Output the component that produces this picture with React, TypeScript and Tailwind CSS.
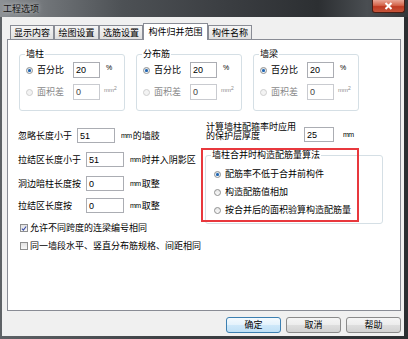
import React from "react";

function Radio({ checked, disabled }: { checked?: boolean; disabled?: boolean }) {
  return (
    <span
      className={
        disabled
          ? "w-[7px] h-[7px] rounded-full border border-[#cfcfcf] bg-[#f3f3f3] flex items-center justify-center shrink-0"
          : "w-[7px] h-[7px] rounded-full border border-[#8e8f8f] bg-[linear-gradient(#e6e6e6,#fafafa)] flex items-center justify-center shrink-0"
      }
    >
      {checked && <span className="w-[3px] h-[3px] rounded-full bg-[#1f63b0] shadow-[0_0_1px_#7fb4e8]" />}
    </span>
  );
}

function Check({ checked }: { checked?: boolean }) {
  return (
    <span className="w-[8px] h-[8px] border border-[#8e8f8f] bg-[linear-gradient(#e2e2e2,#f8f8f8)] flex items-center justify-center shrink-0">
      {checked && (
        <svg width="7" height="7" viewBox="0 0 7 7">
          <path d="M1 3.6 L2.8 5.4 L6 1.2" stroke="#3a4ea8" strokeWidth="1.3" fill="none" />
        </svg>
      )}
    </span>
  );
}

function Field({ value, w, disabled }: { value: string; w: string; disabled?: boolean }) {
  return (
    <div
      className={
        (disabled
          ? "border-[#c9cbd0] text-[#444] "
          : "border-[#abadb3] text-black ") +
        "border bg-white pl-[2px] flex items-center shrink-0 " +
        w
      }
    >
      {value}
    </div>
  );
}

function Group({ title }: { title: string }) {
  return (
    <div className="relative w-[106px] h-[57px] border border-[#d5dfe5] rounded-[3px] flex flex-col pt-[7px] pl-[6px] gap-[6px]">
      <span className="absolute left-[5px] top-[-6px] bg-white px-[1px] leading-[10px]">{title}</span>
      <div className="flex items-center h-[16px]">
        <Radio checked />
        <span className="ml-[4px] w-[36px]">百分比</span>
        <Field value="20" w="w-[27px] h-[16px]" />
        <span className="ml-[6px] text-[7px] mb-[4px]">%</span>
      </div>
      <div className="flex items-center h-[16px]">
        <Radio disabled />
        <span className="ml-[4px] w-[36px] text-[#8a8a8a]">面积差</span>
        <Field value="0" w="w-[27px] h-[16px]" disabled />
        <span className="ml-[4px] text-[6px] text-[#8a8a8a] mb-[4px]">
          mm<sup className="text-[5px]">2</sup>
        </span>
      </div>
    </div>
  );
}

function Btn({ label, def }: { label: string; def?: boolean }) {
  return (
    <div
      className={
        def
          ? "w-[55px] h-[16px] rounded-[3px] border border-[#3c7fb1] bg-[linear-gradient(#f4fafe,#e3f2fc_50%,#cfe8f9_51%,#bfe0f6)] flex items-center justify-center"
          : "w-[55px] h-[16px] rounded-[3px] border border-[#8a8a8a] bg-[linear-gradient(#f5f5f5,#ececec_50%,#dedede_51%,#d2d2d2)] flex items-center justify-center"
      }
    >
      {label}
    </div>
  );
}

function Tab({ label, w, active }: { label: string; w: string; active?: boolean }) {
  return (
    <div
      className={
        active
          ? "relative z-10 h-[17px] mb-[-1px] bg-white border border-b-0 border-[#898c95] flex items-center justify-center pb-[1px] " + w
          : "h-[14px] bg-[linear-gradient(#f6f6f6,#eaeaea_50%,#e0e0e0)] border border-b-0 border-[#898c95] flex items-center justify-center " + w
      }
    >
      {label}
    </div>
  );
}

function Unit({ rest }: { rest?: string }) {
  return (
    <span className="ml-[6px] flex items-center">
      <span className="text-[7px] tracking-[-0.5px]">mm</span>
      {rest && <span className="ml-[1px]">{rest}</span>}
    </span>
  );
}

export default function App() {
  return (
    <div className="w-[408px] h-[339px] overflow-hidden flex flex-col bg-[linear-gradient(90deg,#5e6266,#3e4145_40%,#2b2e31)] text-[9px] leading-[10px] text-black font-['Liberation_Sans','Noto_Sans_CJK_SC',sans-serif]">
      {/* title bar */}
      <div className="relative h-[17px] shrink-0 flex items-center bg-[linear-gradient(90deg,#8d9195,#6f7377_12%,#4d5155_30%,#3b3e42_55%,#2c2f32_78%,#4a4e52_90%,#34373a)]">
        <span className="ml-[3px] mt-[1px] text-[#151515] [text-shadow:0_0_4px_rgba(255,255,255,0.7)]">工程选项</span>
        <div className="absolute right-[3px] top-0 w-[33px] h-[13px] rounded-b-[3px] border border-t-0 border-[#4a1d14] bg-[linear-gradient(#e9a797,#d4644a_45%,#bf3a22_55%,#c7553a)] flex items-center justify-center">
          <svg width="9" height="8" viewBox="0 0 9 8">
            <path d="M1.5 1 L7.5 7 M7.5 1 L1.5 7" stroke="#fff" strokeWidth="2" />
          </svg>
        </div>
      </div>

      {/* body */}
      <div className="flex-1 ml-[2px] mr-[4px] mb-[3px] bg-[#f0f0f0] flex flex-col">
        {/* tabs */}
        <div className="mt-[6px] ml-[8px] h-[16px] flex items-end">
          <Tab label="显示内容" w="w-[44px]" />
          <Tab label="绘图设置" w="w-[45px]" />
          <Tab label="选筋设置" w="w-[44px]" />
          <Tab label="构件归并范围" w="w-[65px]" active />
          <Tab label="构件名称" w="w-[44px]" />
        </div>

        {/* panel */}
        <div className="relative ml-[5px] w-[394px] h-[272px] border border-[#898c95] bg-white flex flex-col">
          <div className="mt-[14px] ml-[11px] flex gap-[11px]">
            <Group title="墙柱" />
            <Group title="分布筋" />
            <Group title="墙梁" />
          </div>

          <div className="ml-[10px] flex">
            {/* left column */}
            <div className="w-[187px] flex flex-col">
              <div className="mt-[17px] h-[15px] flex items-center">
                <span className="w-[59px]">忽略长度小于</span>
                <Field value="51" w="w-[38px] h-[15px]" />
                <Unit rest="的墙肢" />
              </div>
              <div className="mt-[9px] h-[15px] flex items-center">
                <span className="w-[68px]">拉结区长度小于</span>
                <Field value="51" w="w-[38px] h-[15px]" />
                <Unit rest="时并入阴影区" />
              </div>
              <div className="mt-[9px] h-[15px] flex items-center">
                <span className="w-[68px]">洞边暗柱长度按</span>
                <Field value="0" w="w-[38px] h-[15px]" />
                <Unit rest="取整" />
              </div>
              <div className="mt-[7px] h-[15px] flex items-center">
                <span className="w-[68px]">拉结区长度按</span>
                <Field value="0" w="w-[38px] h-[15px]" />
                <Unit rest="取整" />
              </div>
              <div className="mt-[10px] h-[10px] flex items-center ml-[2px] whitespace-nowrap">
                <Check checked />
                <span className="ml-[2px]">允许不同跨度的连梁编号相同</span>
              </div>
              <div className="mt-[8px] h-[10px] flex items-center ml-[2px] whitespace-nowrap">
                <Check />
                <span className="ml-[2px]">同一墙段水平、竖直分布筋规格、间距相同</span>
              </div>
            </div>

            {/* right column */}
            <div className="flex flex-col">
              <div className="mt-[12px] flex items-start">
                <span className="w-[98px] leading-[9px] ml-[1px]">
                  计算墙柱配箍率时应用
                  <br />
                  的保护层厚度
                </span>
                <div className="mt-[4px] flex items-center">
                  <Field value="25" w="w-[30px] h-[15px]" />
                  <span className="ml-[9px] text-[7px] tracking-[-0.5px]">mm</span>
                </div>
              </div>
              <div className="relative mt-[13px] w-[178px] h-[69px] border border-[#d5dfe5] rounded-[3px] flex flex-col pt-[13px] pl-[8px] gap-[8px]">
                <span className="absolute left-[5px] top-[-6px] bg-white px-[1px] leading-[10px]">墙柱合并时构造配筋量算法</span>
                <div className="h-[10px] flex items-center">
                  <Radio checked />
                  <span className="ml-[4px]">配筋率不低于合并前构件</span>
                </div>
                <div className="h-[10px] flex items-center">
                  <Radio />
                  <span className="ml-[4px]">构造配筋值相加</span>
                </div>
                <div className="h-[10px] flex items-center">
                  <Radio />
                  <span className="ml-[4px]">按合并后的面积验算构造配筋量</span>
                </div>
              </div>
            </div>
          </div>

          {/* red annotation box */}
          <div className="absolute left-[193px] top-[108px] w-[158px] h-[74px] border-2 border-[#e8383d] pointer-events-none" />
        </div>

        {/* buttons */}
        <div className="mt-[6px] flex justify-end gap-[5px] pr-[3px]">
          <Btn label="确定" def />
          <Btn label="取消" />
          <Btn label="帮助" />
        </div>
      </div>
    </div>
  );
}
